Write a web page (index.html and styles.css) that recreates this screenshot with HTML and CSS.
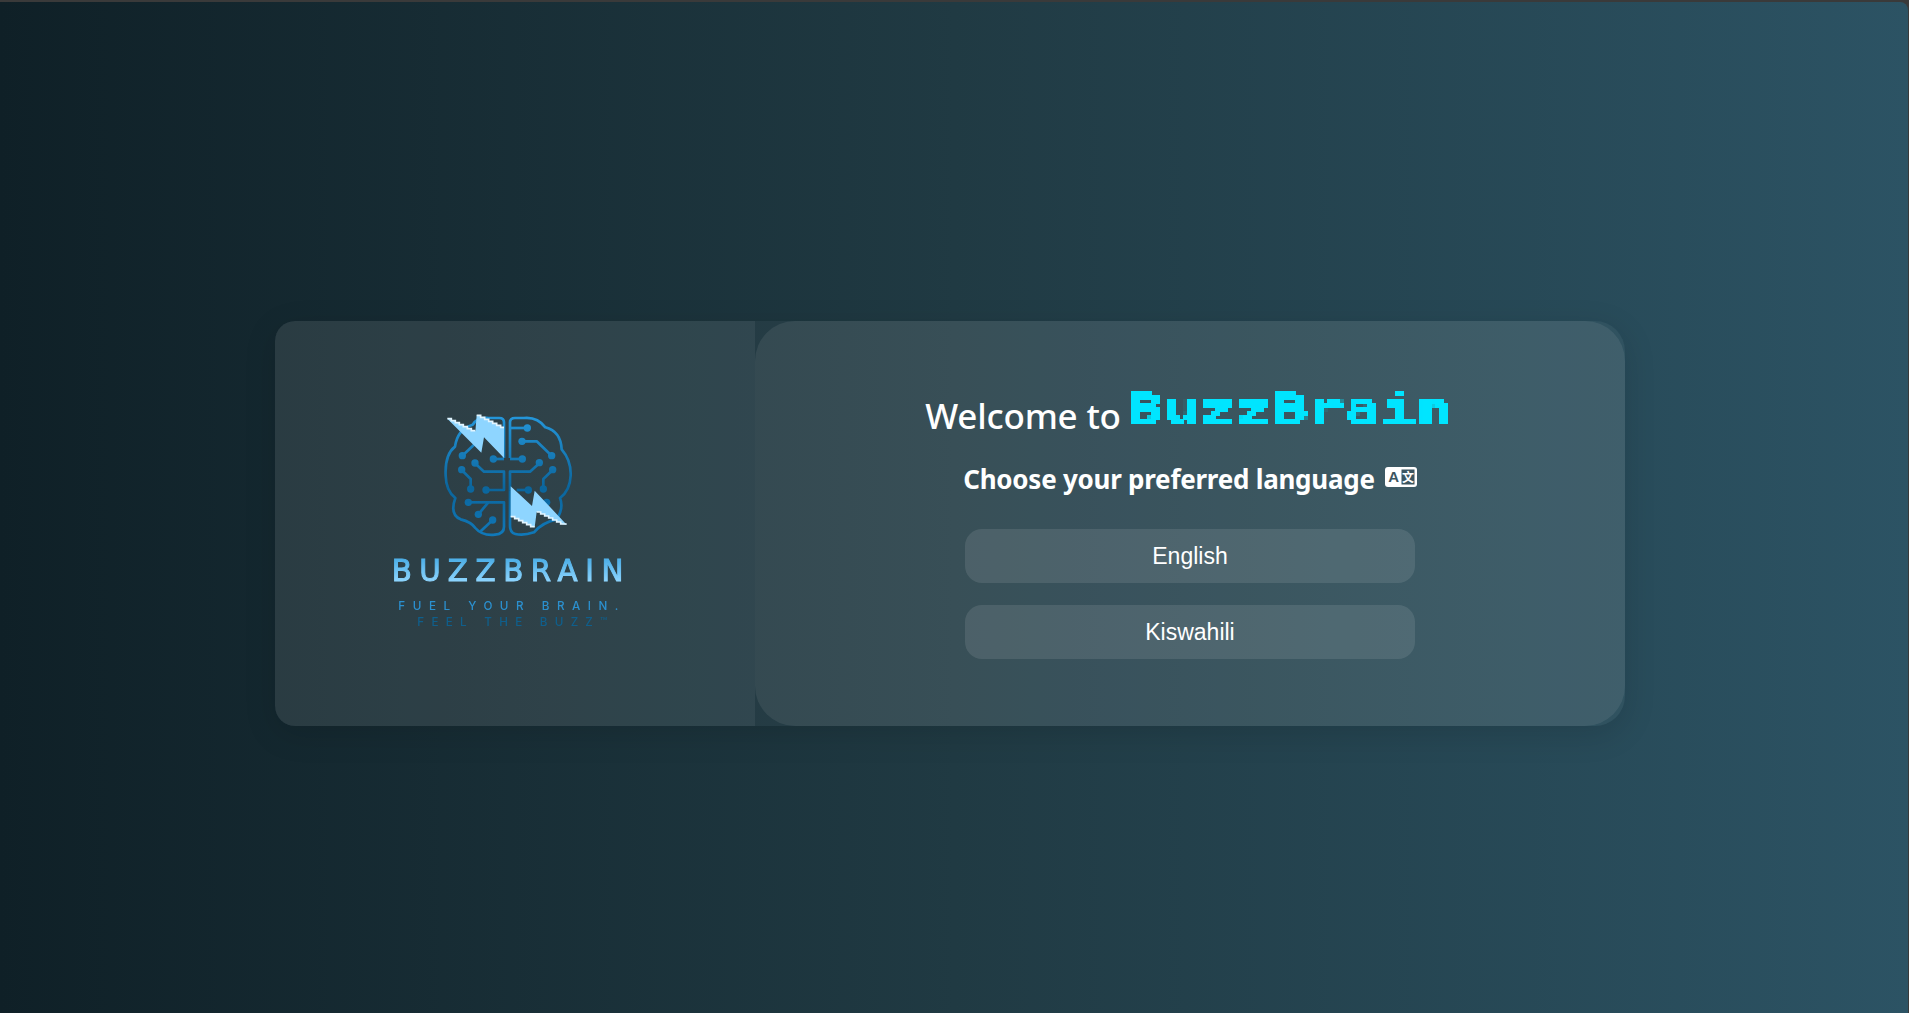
FILE: index.html
```html
<!DOCTYPE html>
<html lang="en">
<head>
<meta charset="utf-8">
<title>BuzzBrain</title>
<link rel="stylesheet" href="styles.css">
</head>
<body>
<svg class="defs" width="0" height="0" aria-hidden="true">
  <defs>
    <filter id="pixelate" x="0" y="0" width="100%" height="100%" color-interpolation-filters="sRGB">
      <feFlood x="2" y="2" width="1" height="1" flood-color="#000"/>
      <feComposite width="4" height="4"/>
      <feTile result="grid"/>
      <feComposite in="SourceGraphic" in2="grid" operator="in"/>
      <feMorphology operator="dilate" radius="2"/>
      <feComponentTransfer>
        <feFuncA type="linear" slope="4" intercept="-1"/>
      </feComponentTransfer>
    </filter>
  </defs>
</svg>
<main class="page">
  <section class="card">
    <div class="brand">
      <svg class="logo" viewBox="15 -50 900 900" role="img" aria-label="BuzzBrain logo">
        <defs>
          <linearGradient id="brainFill" gradientUnits="userSpaceOnUse" x1="0" y1="70" x2="0" y2="440">
            <stop offset="0" stop-color="#2598dc"/>
            <stop offset=".6" stop-color="#0b659c"/>
            <stop offset="1" stop-color="#1079ba"/>
          </linearGradient>
          <linearGradient id="wordFill" gradientUnits="userSpaceOnUse" x1="0" y1="508" x2="0" y2="574">
            <stop offset="0" stop-color="#4fb0e8"/>
            <stop offset="1" stop-color="#8fd6ff"/>
          </linearGradient>
        </defs>
        <g class="circuit" fill="none" stroke="url(#brainFill)">
          <path d="M432 202V95Q432 82 418 82H385Q352 80 338 102Q292 116 285 168Q254 192 257 255Q258 300 286 322Q268 372 302 386Q334 394 346 412Q366 436 405 432Q432 430 432 408V335H385L355 371"/>
          <path d="M325 335H385"/>
          <path d="M398 388L362 422"/>
          <path d="M345 218L372 243H432V298H378"/>
          <path d="M305 238L332 265V295"/>
          <path d="M400 205H432"/>
          <path d="M307 195L347 158"/>
          <path d="M450 202V95Q450 82 465 82H492Q532 78 556 110Q602 122 605 176Q634 210 632 255Q630 300 600 322Q612 352 590 386Q545 396 522 425Q490 436 466 430Q450 426 450 405V300"/>
          <path d="M502 112H450"/>
          <path d="M486 152H530L575 195"/>
          <path d="M487 205H450"/>
          <path d="M538 218L510 243H450V300"/>
          <path d="M578 238L550 265V295"/>
          <path d="M505 298H470"/>
          <path d="M560 335H520"/>
        </g>
        <g fill="url(#brainFill)">
          <circle cx="502" cy="112" r="11"/><circle cx="486" cy="152" r="11"/><circle cx="575" cy="195" r="11"/>
          <circle cx="487" cy="205" r="11"/><circle cx="538" cy="216" r="11"/><circle cx="578" cy="237" r="11"/>
          <circle cx="550" cy="295" r="11"/><circle cx="505" cy="298" r="11"/><circle cx="560" cy="335" r="11"/>
          <circle cx="400" cy="205" r="11"/><circle cx="307" cy="195" r="11"/><circle cx="345" cy="217" r="11"/>
          <circle cx="305" cy="237" r="11"/><circle cx="332" cy="295" r="11"/><circle cx="378" cy="298" r="11"/>
          <circle cx="325" cy="335" r="11"/><circle cx="355" cy="371" r="11"/><circle cx="398" cy="388" r="11"/>
        </g>
        <g class="bolts">
          <polygon points="262,84 274,84 274,90 286,90 286,96 298,96 298,102 310,102 310,108 322,108 322,114 334,114 334,120 346,120 346,124 350,74 362,74 362,80 374,80 374,86 386,86 386,92 398,92 398,98 410,98 410,104 422,104 422,110 432,110 432,202 372,140 364,186"/>
          <polygon points="452,287 516,346 524,300 620,402 602,400 602,394 590,394 590,388 578,388 578,382 566,382 566,376 554,376 554,370 542,370 542,364 530,364 524,410 512,408 512,402 500,402 500,396 488,396 488,390 476,390 476,384 464,384 464,378 452,378"/>
        </g>
        <g class="bolt-edges" fill="none">
          <polyline points="262,84 274,84 274,90 286,90 286,96 298,96 298,102 310,102 310,108 322,108 322,114 334,114 334,120 346,120"/>
          <polyline points="350,74 362,74 362,80 374,80 374,86 386,86 386,92 398,92 398,98 410,98 410,104 422,104 422,110 432,110"/>
          <polyline points="452,378 464,378 464,384 476,384 476,390 488,390 488,396 500,396 500,402 512,402 512,408 524,408"/>
          <polyline points="530,364 542,364 542,370 554,370 554,376 566,376 566,382 578,382 578,388 590,388 590,394 602,394 602,400 620,400"/>
        </g>
        <text class="word" x="95" y="572" textLength="695" fill="url(#wordFill)" stroke="url(#wordFill)">BUZZBRAIN</text>
        <text class="tag" x="115" y="659" textLength="660">FUEL YOUR BRAIN.</text>
        <text class="tag tag-dim" x="172" y="707" textLength="570">FEEL THE BUZZ™</text>
      </svg>
    </div>
    <div class="panel">
      <h1 class="title">Welcome to <span class="pixel-wrap"><span class="pixel">BuzzBrain</span></span></h1>
      <h2 class="subtitle">Choose your preferred language
        <svg class="translate" viewBox="0 0 32 20" aria-hidden="true">
          <rect class="translate-bg" width="32" height="20" rx="3"/>
          <text class="translate-a" x="8.5" y="15" text-anchor="middle">A</text>
          <rect class="translate-box" x="16.5" y="2.5" width="13" height="15"/>
          <text class="translate-zi" x="23" y="15" text-anchor="middle">文</text>
        </svg>
      </h2>
      <div class="choices">
        <button class="choice" type="button">English</button>
        <button class="choice" type="button">Kiswahili</button>
      </div>
    </div>
  </section>
</main>
</body>
</html>
```
FILE: styles.css
```css
* { box-sizing: border-box; }
html { height: 100%; background: #3a3a3a; }
body {
  margin: 0;
  height: 100%;
  padding-top: 2px;
  padding-right: 1px;
  overflow: hidden;
  font-family: "Noto Sans", "Open Sans", sans-serif;
  color: #fff;
}
.defs { position: absolute; }
.page {
  height: 100%;
  display: flex;
  align-items: center;
  justify-content: center;
  padding: 32px 8px 0 0;
  background: linear-gradient(90deg, #0f2027 0%, #203a43 50%, #2c5364 100%);
  border-top-right-radius: 8px;
}
.card {
  width: 1350px;
  height: 405px;
  display: flex;
  background: rgba(255, 255, 255, .04);
  border-radius: 20px 30px 30px 20px;
  box-shadow: 0 8px 32px rgba(0, 0, 0, .13);
}
.brand {
  width: 480px;
  flex: none;
  display: flex;
  align-items: center;
  justify-content: center;
  background: rgba(255, 255, 255, .06);
  border-radius: 20px 0 0 20px;
}
.logo { width: 300px; height: 300px; display: block; filter: blur(.4px); overflow: visible; }
.circuit { stroke-width: 8; stroke-linejoin: round; }
.bolts { fill: #8ed5ff; }
.bolt-edges { stroke: #e2f5ff; stroke-width: 5; }
.word { font: 400 88px "DejaVu Sans", sans-serif; stroke-width: 3; }
.tag { font: 500 35px "Inter", sans-serif; fill: #2b90cf; }
.tag-dim { fill: #0f5f8c; }
.panel {
  flex: 1;
  display: flex;
  flex-direction: column;
  align-items: center;
  padding-top: 66px;
  background: rgba(255, 255, 255, .075);
  border-radius: 40px;
}
.title {
  margin: 0;
  padding-right: 2px;
  font-size: 35px;
  font-weight: 500;
  letter-spacing: -.2px;
  line-height: 44px;
  white-space: nowrap;
}
.pixel-wrap { display: inline-block; width: 326px; height: 44px; margin-left: -3px; filter: url(#pixelate); vertical-align: 6px; }
.pixel {
  display: inline-block;
  font: 700 41px/44px "DejaVu Sans Mono", monospace;
  letter-spacing: 0;
  color: #00e5ff;
  transform: scaleX(1.465);
  transform-origin: 0 50%;
}
.subtitle {
  margin: 21px 0 0;
  font-size: 26px;
  font-weight: 700;
  letter-spacing: -.25px;
  line-height: 40px;
  white-space: nowrap;
  display: flex;
  align-items: center;
  gap: 10px;
}
.translate { width: 32px; height: 20px; display: block; margin-top: -4px; }
.translate-bg { fill: #fff; }
.translate-a { font: 700 15px "Liberation Sans", sans-serif; fill: #3b5560; }
.translate-box { fill: #3b5560; }
.translate-zi { font: 700 12px "Noto Sans CJK SC", sans-serif; fill: #fff; }
.choices { margin-top: 30px; display: flex; flex-direction: column; gap: 22px; }
.choice {
  width: 450px;
  height: 54px;
  border: 0;
  border-radius: 17px;
  background: rgba(255, 255, 255, .1);
  color: #fff;
  font: 400 23px "Liberation Sans", Arial, sans-serif;
  padding: 0;
}
```
